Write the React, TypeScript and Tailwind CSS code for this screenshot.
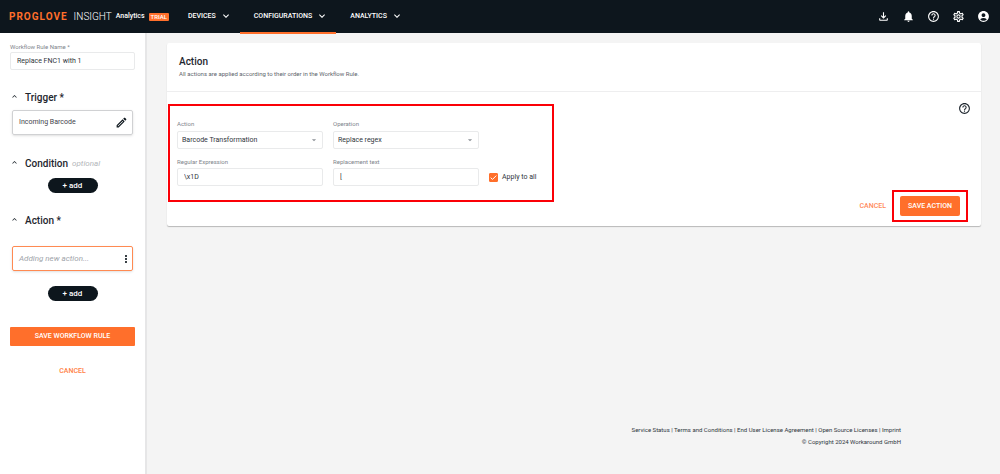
import { useState, type ReactNode } from "react";
import {
  MdAccountCircle,
  MdArrowDropDown,
  MdExpandLess,
  MdExpandMore,
  MdHelpOutline,
  MdMoreVert,
  MdNotifications,
  MdOutlineEdit,
  MdOutlineFileDownload,
  MdOutlineSettings,
} from "react-icons/md";

const navItems = [
  { label: "DEVICES", active: false },
  { label: "CONFIGURATIONS", active: true },
  { label: "ANALYTICS", active: false },
];

const headerActions = [
  { label: "Downloads", Icon: MdOutlineFileDownload },
  { label: "Notifications", Icon: MdNotifications },
  { label: "Help", Icon: MdHelpOutline },
  { label: "Settings", Icon: MdOutlineSettings },
  { label: "Account", Icon: MdAccountCircle },
];

const footerLinks = [
  "Service Status",
  "Terms and Conditions",
  "End User License Agreement",
  "Open Source Licenses",
  "Imprint",
];

const labelClass = "block text-[6px] leading-[8px] text-[#80858c]";
const boxClass =
  "block h-[18px] w-full rounded-[2px] border border-[#e9eaeb] bg-white text-[7px] text-[#2f363d] outline-none";

function Header() {
  return (
    <header className="flex h-[33px] items-stretch bg-[#0d161d] text-white">
      <a href="#home" className="flex w-[174px] shrink-0 items-center pl-[9px]">
        <span className="text-[10px] font-bold tracking-[1px] text-[#ff6f2b]">PROGLOVE</span>
        <span className="ml-1.5 text-[10px] font-light">INSIGHT</span>
        <span className="ml-1 text-[7px] font-medium">Analytics</span>
        <span className="ml-1 rounded-[1px] bg-[#ff6f2b] px-0.5 text-[6px] leading-[8px] font-medium">TRIAL</span>
      </a>
      <nav className="-mb-px flex items-stretch">
        {navItems.map(({ label, active }) => (
          <button
            key={label}
            type="button"
            className={`flex items-center gap-1 border-b-2 pr-2 pl-3.5 text-[7px] font-medium ${
              active ? "border-[#ff6f2b]" : "border-transparent"
            }`}
          >
            {label}
            <MdExpandMore className="size-3" />
          </button>
        ))}
      </nav>
      <div className="ml-auto flex items-center gap-3 pr-[10px]">
        {headerActions.map(({ label, Icon }) => (
          <button key={label} type="button" aria-label={label}>
            <Icon className="size-[13px]" />
          </button>
        ))}
      </div>
    </header>
  );
}

function SectionTitle({ children, note }: { children: ReactNode; note?: string }) {
  return (
    <h2 className="flex items-center text-[10px] leading-4 font-medium text-[#1d252d]">
      <button type="button" aria-label="Collapse section" className="mr-1.5 -mt-1">
        <MdExpandLess className="size-[9px]" />
      </button>
      {children}
      {note && <span className="ml-1 text-[8px] font-normal text-[#b3b6ba] italic">{note}</span>}
    </h2>
  );
}

function AddButton() {
  return (
    <button
      type="button"
      className="mx-auto block h-[15px] w-[50px] rounded-full bg-[#0d161d] text-[8px] leading-[15px] font-medium text-white"
    >
      + add
    </button>
  );
}

function Sidebar() {
  return (
    <aside className="w-[147px] shrink-0 border-r-2 border-[#e6e6e7] bg-white px-[10px] pt-[10px]">
      <label htmlFor="rule-name" className={labelClass}>
        Workflow Rule Name *
      </label>
      <input id="rule-name" defaultValue="Replace FNC1 with 1" className={`${boxClass} mt-px px-1.5`} />

      <div className="mt-5">
        <SectionTitle>Trigger *</SectionTitle>
        <div className="mx-0.5 mt-1 flex h-[25px] items-center justify-between rounded-[2px] border border-[#d0d1d3] pr-1 pl-1.5 text-[7px] text-[#3f454c] shadow-sm">
          Incoming Barcode
          <button type="button" aria-label="Edit trigger">
            <MdOutlineEdit className="size-[13px] text-[#0d161d]" />
          </button>
        </div>
      </div>

      <div className="mt-[21px]">
        <SectionTitle note="optional">Condition</SectionTitle>
        <div className="mt-1.5">
          <AddButton />
        </div>
      </div>

      <div className="mt-5">
        <SectionTitle>Action *</SectionTitle>
        <div className="mx-0.5 mt-[17px] flex h-[25px] items-center justify-between rounded-[2px] border border-[#ff8a52] pl-1.5 text-[8px] text-[#a0a4aa] italic shadow-sm">
          Adding new action...
          <button type="button" aria-label="Action menu">
            <MdMoreVert className="size-3 text-[#0d161d]" />
          </button>
        </div>
        <div className="mt-[15px]">
          <AddButton />
        </div>
      </div>

      <button
        type="button"
        className="mt-[26px] block h-[19px] w-full rounded-[1px] bg-[#ff6f2b] text-[7px] font-medium text-white"
      >
        SAVE WORKFLOW RULE
      </button>
      <button type="button" className="mx-auto mt-5 block text-[7px] leading-[10px] font-medium text-[#ff8145]">
        CANCEL
      </button>
    </aside>
  );
}

function SelectField({ id, label, options }: { id: string; label: string; options: string[] }) {
  return (
    <div>
      <label htmlFor={id} className={labelClass}>
        {label}
      </label>
      <div className="mt-[3px] grid items-center">
        <select id={id} className={`${boxClass} col-start-1 row-start-1 appearance-none pr-4 pl-1`}>
          {options.map((option) => (
            <option key={option}>{option}</option>
          ))}
        </select>
        <MdArrowDropDown className="pointer-events-none col-start-1 row-start-1 mr-1 size-[10px] justify-self-end text-[#8d9197]" />
      </div>
    </div>
  );
}

function TextField({ id, label, value }: { id: string; label: string; value: string }) {
  return (
    <div>
      <label htmlFor={id} className={labelClass}>
        {label}
      </label>
      <input id={id} defaultValue={value} className={`${boxClass} mt-[2px] px-1.5`} />
    </div>
  );
}

function ActionCard() {
  const [applyToAll, setApplyToAll] = useState(true);
  return (
    <section className="rounded-[2px] bg-white shadow-[0_1px_1px_#b8b8b8]">
      <div className="border-b border-[#eeeeef] px-3 pt-3 pb-3">
        <h1 className="text-[10px] leading-[14px] font-medium text-[#1d252d]">Action</h1>
        <p className="text-[6px] leading-[10px] text-[#60656c]">
          All actions are applied according to their order in the Workflow Rule.
        </p>
      </div>
      <div className="flex items-start justify-between pt-3 pr-[10px] pl-px">
        <div className="grid w-[386px] grid-cols-[146px_146px_1fr] gap-x-[10px] gap-y-[9px] border-2 border-[#fb0007] px-[7px] pt-[14px] pb-[14px]">
          <SelectField id="action" label="Action" options={["Barcode Transformation"]} />
          <SelectField id="operation" label="Operation" options={["Replace regex"]} />
          <span />
          <TextField id="regex" label="Regular Expression" value="\x1D" />
          <TextField id="replacement" label="Replacement text" value="[" />
          <label className="flex h-[18px] items-center gap-1 self-end text-[7px] text-[#2f363d]">
            <span className="grid">
              <input
                type="checkbox"
                checked={applyToAll}
                onChange={(event) => setApplyToAll(event.target.checked)}
                className="col-start-1 row-start-1 size-[9px] appearance-none rounded-[1px] border border-[#ff6f2b] checked:bg-[#ff6f2b]"
              />
              {applyToAll && (
                <svg
                  viewBox="0 0 9 9"
                  className="pointer-events-none col-start-1 row-start-1 size-[9px] fill-none stroke-white"
                >
                  <path d="M1.7 4.7 3.5 6.4 7.3 2.6" />
                </svg>
              )}
            </span>
            Apply to all
          </label>
        </div>
        <button type="button" aria-label="Action help" className="-mt-0.5">
          <MdHelpOutline className="size-[13px] text-[#1d252d]" />
        </button>
      </div>
      <div className="-mt-3 flex items-center justify-end gap-1.5 pr-[13px] pb-1">
        <button type="button" className="text-[7px] font-medium text-[#ff8a5c]">
          CANCEL
        </button>
        <div className="border-2 border-[#fb0007] px-1.5 py-1">
          <button
            type="button"
            className="block h-5 w-[60px] rounded-[2px] bg-[#ff6f2b] text-[7px] font-medium text-white"
          >
            SAVE ACTION
          </button>
        </div>
      </div>
    </section>
  );
}

export default function App() {
  return (
    <div className="flex min-h-screen flex-col bg-[#f4f4f4] font-['Roboto',sans-serif]">
      <Header />
      <div className="flex flex-1">
        <Sidebar />
        <div className="flex min-w-0 flex-1 flex-col pt-[10px] pr-[19px] pl-5">
          <main>
            <ActionCard />
          </main>
          <footer className="mt-auto pr-20 pb-[26px] text-right text-[6px] leading-3 text-[#2f363d]">
            <p>
              {footerLinks.map((link, index) => (
                <span key={link}>
                  {index > 0 && " | "}
                  <a href="#footer">{link}</a>
                </span>
              ))}
            </p>
            <p>© Copyright 2024 Workaround GmbH</p>
          </footer>
        </div>
      </div>
    </div>
  );
}
